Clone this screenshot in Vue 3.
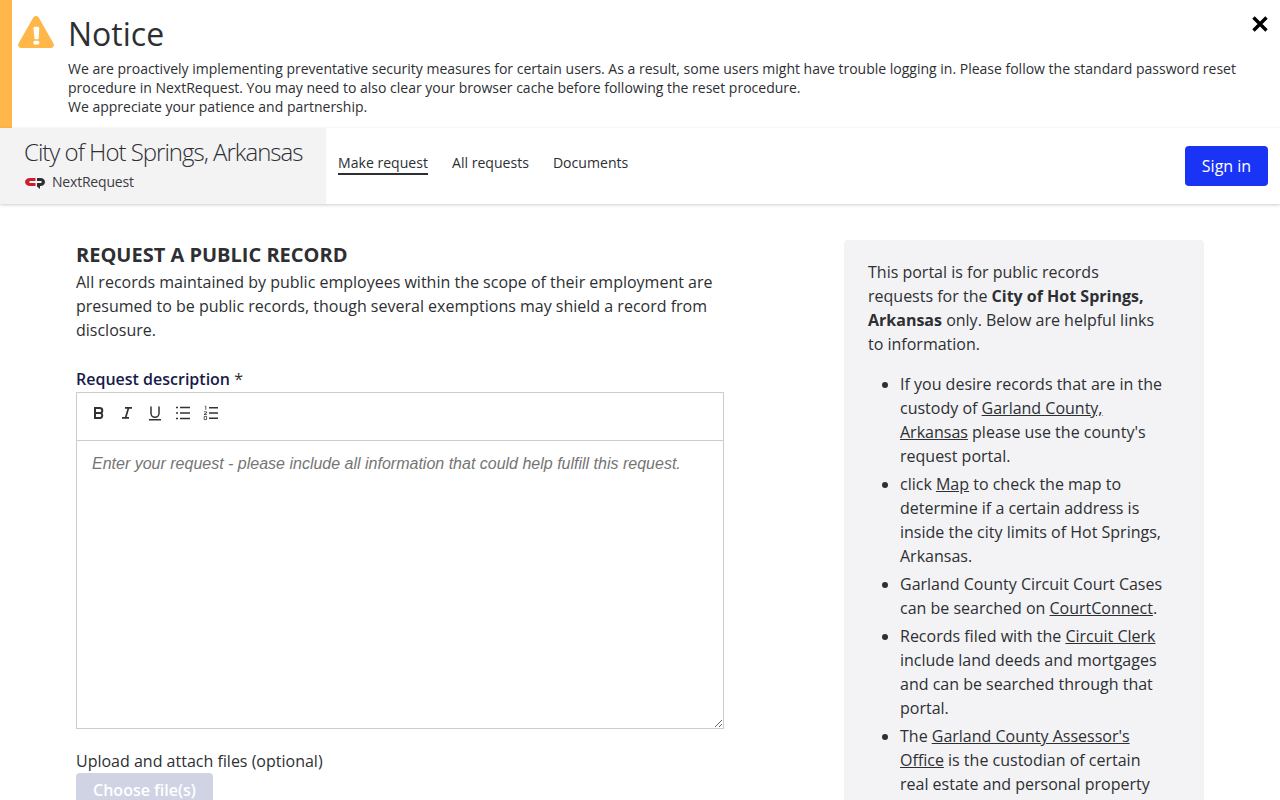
<template>
  <div class="page">
    <!-- notice banner -->
    <section class="notice">
      <svg class="notice-icon" viewBox="0 0 36 32" width="36" height="32">
        <path d="M18 0c-1.200 0-2.300.6-2.900 1.700L.5 27.500C-.7 29.700.8 32 3.200 32h29.600c2.400 0 3.900-2.300 2.700-4.500L20.900 1.700C20.300.6 19.200 0 18 0z" fill="#ffb74a" />
        <path d="M15.400 12.200c0-.9.700-1.500 1.500-1.500h2.900c.8 0 1.500.6 1.500 1.500l-.6 9.800c0 .8-.6 1.300-1.300 1.300h-1.700c-.7 0-1.300-.5-1.300-1.300z" fill="#fff" />
        <rect x="15.400" y="24.700" width="5.900" height="3.800" rx="1.500" fill="#fff" />
      </svg>
      <div class="notice-body">
        <h2 class="notice-title">Notice</h2>
        <p>We are proactively implementing preventative security measures for certain users. As a result, some users might have trouble logging in. Please follow the standard password reset procedure in NextRequest. You may need to also clear your browser cache before following the reset procedure.</p>
        <p>We appreciate your patience and partnership.</p>
      </div>
      <svg class="notice-close" viewBox="0 0 16 16" width="16" height="16">
        <path d="M1.500 1.500l13 13M14.500 1.500l-13 13" stroke="#000" stroke-width="3.400" fill="none" />
      </svg>
    </section>

    <!-- navbar -->
    <header class="navbar">
      <div class="brand">
        <div class="brand-name">City of Hot Springs, Arkansas</div>
        <div class="brand-logo">
          <svg viewBox="0 0 20 11" width="20" height="11">
            <path d="M5 0h5.500v3H4.500v2h6v3H5C2 8 0 6.300 0 4s2-4 5-4z" fill="#c8202f" />
            <path d="M12 0h3.500c2.800 0 4.500 1.800 4.500 4s-1.700 4-4.500 4H15v3l-3-2.600V5h4.500V3H12z" fill="#2f2f33" />
          </svg>
          <span>NextRequest</span>
        </div>
      </div>
      <nav class="nav-links">
        <a class="active">Make request</a>
        <a>All requests</a>
        <a>Documents</a>
      </nav>
      <button class="signin">Sign in</button>
    </header>

    <main class="content">
      <div class="form-col">
        <h1 class="form-title">Request a public record</h1>
        <p class="intro">All records maintained by public employees within the scope of their employment are presumed to be public records, though several exemptions may shield a record from disclosure.</p>

        <label class="field-label"><span>Request description</span> *</label>
        <div class="editor">
          <div class="toolbar">
            <svg v-for="icon in toolbarIcons" :key="icon.name" class="tool" viewBox="0 0 16 16" width="16" height="16">
              <path v-for="(d, i) in icon.paths" :key="i" :d="d" fill="none" stroke="#333" :stroke-width="icon.width" />
              <path v-for="(d, i) in icon.thin" :key="i" :d="d" fill="none" stroke="#333" stroke-width="0.8" />
            </svg>
          </div>
          <div class="editor-area">
            <span class="placeholder">Enter your request - please include all information that could help fulfill this request.</span>
            <svg class="resize" viewBox="0 0 10 10" width="10" height="10">
              <path d="M9 2L2 9M9 6L6 9" stroke="#666" stroke-width="1" fill="none" />
            </svg>
          </div>
        </div>

        <div class="upload-label">Upload and attach files (optional)</div>
        <button class="choose">Choose file(s)</button>
      </div>

      <aside class="side">
        <p>This portal is for public records requests for the <b>City of Hot Springs, Arkansas</b> only. Below are helpful links to information.</p>
        <ul>
          <li>If you desire records that are in the custody of <a>Garland County, Arkansas</a> please use the county's request portal.</li>
          <li>click <a>Map</a> to check the map to determine if a certain address is inside the city limits of Hot Springs, Arkansas.</li>
          <li>Garland County Circuit Court Cases can be searched on <a>CourtConnect</a>.</li>
          <li>Records filed with the <a>Circuit Clerk</a> include land deeds and mortgages and can be searched through that portal.</li>
          <li>The <a>Garland County Assessor's Office</a> is the custodian of certain real estate and personal property</li>
        </ul>
      </aside>
    </main>
  </div>
</template>

<script setup>
const toolbarIcons = [
  { name: 'bold', width: 2, paths: ['M4 3h4.800a2.500 2.500 0 0 1 0 5H4zM4 8h5.400a2.600 2.600 0 0 1 0 5H4z'] },
  { name: 'italic', width: 1.7, paths: ['M6 2.900h7M3 12.900h7M9.500 2.900L6.500 12.900'] },
  { name: 'underline', width: 1.500, paths: ['M4 1.500v6.800a4 4 0 0 0 8 0V1.500M2 14.800h12'] },
  { name: 'bullets', width: 1.500, paths: ['M5 2.500h10M5 8h10M5 13.500h10M1 2.500h2M1 8h2M1 13.500h2'] },
  {
    name: 'numbers',
    width: 1.500,
    paths: ['M6 2.800h9M6 8h9M6 13.200h9'],
    thin: ['M1.800 1.200h1v3.600', 'M1 6.800h2.600v1.200L1 9.500h2.800', 'M1.200 11.400h2.400v3.200H1.200z']
  }
]
</script>

<style>
html, body {
  margin: 0;
  height: 800px;
  overflow: hidden;
  background: #fff;
}
</style>

<style scoped>
.page {
  font-family: "Open Sans", "Liberation Sans", sans-serif;
  font-size: 16px;
  line-height: 24px;
  color: #2d2f33;
  height: 800px;
  overflow: hidden;
}

.notice {
  display: flex;
  height: 128px;
  box-sizing: border-box;
  border-left: 12px solid #ffb74a;
  padding: 16px 12px 0 6px;
  position: relative;
}

.notice-icon {
  flex: none;
  margin-right: 14px;
}

.notice-title {
  font-size: 32px;
  line-height: 36px;
  font-weight: 400;
  margin: 0 0 7px;
}

.notice-body p {
  margin: 0;
  font-size: 14px;
  line-height: 19px;
}

.notice-close {
  position: absolute;
  top: 16px;
  right: 12px;
}

.navbar {
  display: flex;
  align-items: center;
  height: 76px;
  box-shadow: 0 1px 3px rgba(0, 0, 0, 0.2);
  position: relative;
}

.brand {
  width: 326px;
  height: 100%;
  box-sizing: border-box;
  background: #f3f3f4;
  padding: 9px 0 0 25px;
}

.brand-name {
  font-size: 24px;
  line-height: 30px;
  font-weight: 300;
  letter-spacing: -1px;
  white-space: nowrap;
  margin-left: -1px;
}

.brand-logo {
  display: flex;
  align-items: center;
  gap: 7px;
  font-size: 14px;
  line-height: 20px;
  letter-spacing: -0.2px;
  margin-top: 5px;
  color: #3c3c40;
}

.brand-logo svg {
  margin-top: 2px;
}

.nav-links {
  display: flex;
  gap: 24px;
  margin: 0 0 4px 12px;
  font-size: 14.080px;
}

.nav-links a {
  line-height: 20px;
  border-bottom: 2px solid transparent;
}

.nav-links a.active {
  border-bottom-color: #2d2f33;
}

.signin {
  margin-left: auto;
  margin-right: 12px;
  width: 83px;
  height: 40px;
  border: none;
  border-radius: 4px;
  background: #1a34f5;
  color: #fff;
  font-family: inherit;
  font-size: 16px;
}

.content {
  display: flex;
  align-items: flex-start;
  padding: 36px 0 0 76px;
}

.form-col {
  width: 648px;
  flex: none;
}

.form-title {
  margin: 0;
  font-size: 20px;
  line-height: 30px;
  font-weight: 700;
  text-transform: uppercase;
}

.intro {
  margin: 0 0 25px;
}

.field-label {
  display: block;
  line-height: 24px;
  margin-bottom: 1px;
}

.field-label span {
  font-weight: 600;
  color: #171b4a;
}

.editor {
  border: 1px solid #ccc;
  height: 337px;
  box-sizing: border-box;
  display: flex;
  flex-direction: column;
}

.toolbar {
  height: 48px;
  flex: none;
  box-sizing: border-box;
  border-bottom: 1px solid #ccc;
  display: flex;
  gap: 12px;
  padding: 12px 0 0 14px;
}

.editor-area {
  flex: 1;
  padding: 10px 15px;
  position: relative;
}

.placeholder {
  font-family: "Liberation Sans", Arial, sans-serif;
  font-style: italic;
  color: #757575;
}

.resize {
  position: absolute;
  right: 0;
  bottom: 0;
}

.upload-label {
  margin-top: 20px;
}

.choose {
  display: block;
  width: 137px;
  height: 34px;
  border: none;
  border-radius: 4px;
  background: #cfd3e4;
  color: #fff;
  font-family: inherit;
  font-size: 16px;
  font-weight: 600;
}

.side {
  width: 360px;
  box-sizing: border-box;
  margin-left: 120px;
  padding: 20px 40px 20px 24px;
  background: #f3f3f5;
  border-radius: 4px;
}

.side p {
  margin: 0 0 16px;
}

.side ul {
  margin: 0;
  padding-left: 32px;
}

.side li {
  margin-bottom: 4px;
}

.side a {
  text-decoration: underline;
}
</style>
